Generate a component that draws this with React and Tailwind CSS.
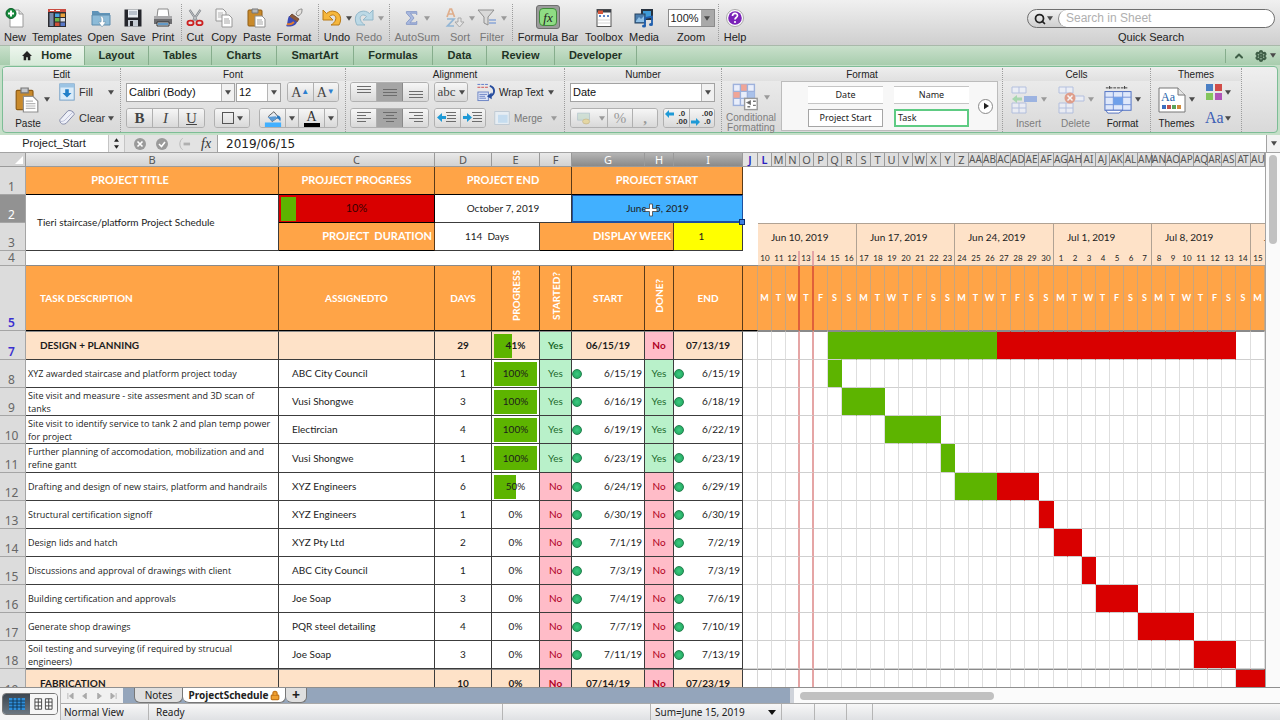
import React from "react";
import { Settings, ChevronUp, Search, Lock } from "lucide-react";

const tasks = [
  { n: 7, group: true, name: "DESIGN + PLANNING", who: "", days: 29, pct: 41, started: "Yes", start: "06/15/19", done: "No", end: "07/13/19", green: [5, 16], red: [17, 33] },
  { n: 8, name: "XYZ awarded staircase and platform project today", who: "ABC City Council", days: 1, pct: 100, started: "Yes", start: "6/15/19", done: "Yes", end: "6/15/19", green: [5, 5] },
  { n: 9, name: "Site visit and measure - site assesment and 3D scan of tanks", who: "Vusi Shongwe", days: 3, pct: 100, started: "Yes", start: "6/16/19", done: "Yes", end: "6/18/19", green: [6, 8] },
  { n: 10, name: "Site visit to identify service to tank 2 and plan temp power for project", who: "Electircian", days: 4, pct: 100, started: "Yes", start: "6/19/19", done: "Yes", end: "6/22/19", green: [9, 12] },
  { n: 11, name: "Further planning of accomodation, mobilization and and refine gantt", who: "Vusi Shongwe", days: 1, pct: 100, started: "Yes", start: "6/23/19", done: "Yes", end: "6/23/19", green: [13, 13] },
  { n: 12, name: "Drafting and design of new stairs, platform and handrails", who: "XYZ Engineers", days: 6, pct: 50, started: "No", start: "6/24/19", done: "No", end: "6/29/19", green: [14, 16], red: [17, 19] },
  { n: 13, name: "Structural certification signoff", who: "XYZ Engineers", days: 1, pct: 0, started: "No", start: "6/30/19", done: "No", end: "6/30/19", red: [20, 20] },
  { n: 14, name: "Design lids and hatch", who: "XYZ Pty Ltd", days: 2, pct: 0, started: "No", start: "7/1/19", done: "No", end: "7/2/19", red: [21, 22] },
  { n: 15, name: "Discussions and approval of drawings with client", who: "ABC City Council", days: 1, pct: 0, started: "No", start: "7/3/19", done: "No", end: "7/3/19", red: [23, 23] },
  { n: 16, name: "Building certification and approvals", who: "Joe Soap", days: 3, pct: 0, started: "No", start: "7/4/19", done: "No", end: "7/6/19", red: [24, 26] },
  { n: 17, name: "Generate shop drawings", who: "PQR steel detailing", days: 4, pct: 0, started: "No", start: "7/7/19", done: "No", end: "7/10/19", red: [27, 30] },
  { n: 18, name: "Soil testing and surveying (if required by strucual engineers)", who: "Joe Soap", days: 3, pct: 0, started: "No", start: "7/11/19", done: "No", end: "7/13/19", red: [31, 33] },
  { n: 19, group: true, name: "FABRICATION", who: "", days: 10, pct: 0, started: "No", start: "07/14/19", done: "No", end: "07/23/19", red: [34, 35] },
];

const dayCols = "L M N O P Q R S T U V W X Y Z AA AB AC AD AE AF AG AH AI AJ AK AL AM AN AO AP AQ AR AS AT AU".split(" ");
const dayNums = dayCols.map((_, i) => (i < 21 ? 10 + i : i - 20));
const dayLetters = "MTWTFSS";
const weeks = ["Jun 10, 2019", "Jun 17, 2019", "Jun 24, 2019", "Jul 1, 2019", "Jul 8, 2019"];
const inRange = (r, i) => r && i >= r[0] && i <= r[1];

function Caret({ dim }) {
  return (
    <svg viewBox="0 0 7 5" className={dim ? "h-[5px] w-[6px] shrink-0 fill-[#9a9a9a]" : "h-[5px] w-[6px] shrink-0 fill-[#4a4a4a]"}>
      <path d="M0 0h7L3.5 5z" />
    </svg>
  );
}

function Dots() {
  return <div className="w-0 shrink-0 self-stretch border-l border-dotted border-[#9c9c9c]" />;
}

function Svg({ className, children, vb = "0 0 20 20" }) {
  return <svg viewBox={vb} className={className || "h-5 w-5"} aria-hidden="true">{children}</svg>;
}

const icons = {
  new: (
    <Svg><path d="M5 2h9l4 4v13H5z" fill="#fff" stroke="#9a9a9a" /><path d="M14 2v4h4" fill="#ddd" stroke="#9a9a9a" /><circle cx="6" cy="5.500" r="5" fill="#168a3c" stroke="#0c5f28" /><path d="M6 2.500v6M3 5.500h6" stroke="#fff" strokeWidth="2" /></Svg>
  ),
  templates: (
    <Svg><rect x="1" y="1" width="18" height="18" fill="#2c2c30" /><rect x="1" y="1" width="18" height="3" fill="#c94b41" /><path d="M3 2.500h4M9 2.500h4" stroke="#fff" /><rect x="2.500" y="5" width="4" height="13" fill="#7a8aa8" /><rect x="8" y="5.500" width="4.500" height="3.500" fill="#4aa3e0" /><rect x="13.500" y="5.500" width="4.500" height="3.500" fill="#e7a03b" /><rect x="8" y="10" width="4.500" height="3.500" fill="#6fb848" /><rect x="13.500" y="10" width="4.500" height="3.500" fill="#d7dde8" /><rect x="8" y="14.500" width="4.500" height="3.500" fill="#d05038" /><rect x="13.500" y="14.500" width="4.500" height="3.500" fill="#5878c8" /></Svg>
  ),
  open: (
    <Svg><path d="M1 3h6l2 2h10v12H1z" fill="#5f93b8" /><path d="M1 7h18v10H1z" fill="#8dbbd8" stroke="#5d8cad" /><path d="M9 8c3 0 4 2 3.500 6H15l-4 5-3.500-5H10c.5-3 0-4-1-6z" fill="#fff" stroke="#6f96ae" strokeWidth=".6" /></Svg>
  ),
  save: (
    <Svg><path d="M1.500 1.500h17v17h-17z" fill="#25262c" /><rect x="5" y="1.500" width="10" height="8" fill="#e9edf2" /><path d="M6 4h8M6 6h8" stroke="#8b97a8" /><rect x="5" y="12" width="10" height="6.500" fill="#c6ccd4" /><rect x="7" y="13" width="3" height="5" fill="#25262c" /></Svg>
  ),
  print: (
    <Svg><path d="M5 1h10l1 8H4z" fill="#fff" stroke="#8a8a8a" /><path d="M1 8h18v8H1z" fill="#6d6d70" /><path d="M1 8h18v3H1z" fill="#a9a9ab" /><path d="M4 14h12v4H4z" fill="#dfeaf4" stroke="#333" /><path d="M5 16h10" stroke="#3b7fb8" strokeWidth="1.500" /></Svg>
  ),
  cut: (
    <Svg className="h-5 w-[18px]"><path d="M4 1l8 12M16 1L8 13" stroke="#7b7f84" strokeWidth="2.400" /><path d="M4 1l8 12M16 1L8 13" stroke="#dfe2e6" strokeWidth=".8" /><ellipse cx="5" cy="15.500" rx="3.400" ry="2.500" fill="none" stroke="#cc2222" strokeWidth="2" /><ellipse cx="15" cy="15.500" rx="3.400" ry="2.500" fill="none" stroke="#cc2222" strokeWidth="2" /></Svg>
  ),
  copy: (
    <Svg><path d="M2 1h7l3 3v9H2z" fill="#f7f7f7" stroke="#979797" /><path d="M4 5h5M4 7h5M4 9h5" stroke="#b5b5b5" /><path d="M8 7h7l3 3v9H8z" fill="#fff" stroke="#979797" /><path d="M10 11h5M10 13h6M10 15h6" stroke="#a5a5a5" /></Svg>
  ),
  paste: (
    <Svg><rect x="1" y="2" width="14" height="16" rx="1" fill="#c98a2b" stroke="#8f5c14" /><path d="M5 1h6v4H5z" fill="#b4b7bb" stroke="#777" /><path d="M8 8h7l3 3v8H8z" fill="#fff" stroke="#8f8f8f" /><path d="M10 12h5M10 14h6M10 16h6" stroke="#a5a5a5" /></Svg>
  ),
  format: (
    <Svg><path d="M12 6c1-4 4-5 6-5 0 3 0 5-4 7z" fill="#e4e2df" stroke="#8b8b8b" /><path d="M8 6l7 5-2 3-8-5z" fill="#8c5a3c" stroke="#59341f" strokeWidth=".7" /><path d="M5 8l8 6c-2 5-8 5-11 4 2-2 1-6 3-10z" fill="#3c4bb5" /><path d="M3 16c3 1 5 0 7-2" stroke="#e07a30" strokeWidth="2" fill="none" /></Svg>
  ),
  undo: (
    <Svg><path d="M1 2v10h10L7.500 8.500C11 5 15 8 13.500 12c-.7 2-2.500 4-4.500 5h8c3-5 2-12-4-13.500C9.500 2.500 7 3.500 4.500 5.500z" fill="#f6b73c" stroke="#b97a17" /></Svg>
  ),
  redo: (
    <Svg><path d="M19 2v10H9l3.500-3.500C9 5 5 8 6.500 12c.7 2 2.500 4 4.500 5H3C0 12 1 5 7 3.500c3.500-1 6 0 8.500 2z" fill="#bcd9e6" stroke="#93b7c9" /></Svg>
  ),
  sum: (
    <Svg className="h-[18px] w-4"><path d="M3 2h13v4l-1.500-2H8l4.500 6L7.500 16h7L16 14v4H3v-2l5.500-6L3 4z" fill="#a9b9df" stroke="#8094c4" /></Svg>
  ),
  sort: (
    <Svg><path d="M2 9l3-8h1.500l3 8M3.500 6h4.500" fill="none" stroke="#dfae8c" strokeWidth="1.700" /><path d="M2 11h7L2.500 18H9" fill="none" stroke="#93b6d5" strokeWidth="1.700" /><path d="M13 10h3v4h3l-4.500 5L10 14h3z" fill="#e4e4e4" stroke="#a9a9a9" /></Svg>
  ),
  filter: (
    <Svg><path d="M1 2h16l-6 7v8l-4-2V9z" fill="#d9d9d9" stroke="#8f8f8f" /><path d="M12 12h7M12 15h7" stroke="#8aa6d8" strokeWidth="1.500" /></Svg>
  ),
  toolbox: (
    <Svg><rect x="3" y="1.500" width="14" height="17" fill="#fff" stroke="#555" /><rect x="3" y="1.500" width="14" height="3" fill="#3b4049" /><rect x="4" y="2.500" width="5" height="3.500" fill="#d8573b" /><path d="M5 8h2M9 8h2M13 8h2" stroke="#5b86c8" strokeWidth="2" /><path d="M4 12h12M4 15h12" stroke="#d5d5d5" /></Svg>
  ),
  media: (
    <Svg><rect x="7" y="1" width="12" height="11" fill="#27323f" /><rect x="9" y="3" width="8" height="7" fill="#3f9bd8" /><rect x="1" y="6" width="10" height="9" fill="#4a7dae" stroke="#27425f" /><path d="M2 13l3-4 2 2 3-3v6H2z" fill="#8fc0e6" /><path d="M11 18v-8l7-1.500V16" fill="none" stroke="#1f5fae" strokeWidth="1.800" /><ellipse cx="10" cy="18" rx="2" ry="1.500" fill="#1f5fae" /><ellipse cx="17" cy="16.500" rx="2" ry="1.500" fill="#1f5fae" /></Svg>
  ),
  help: (
    <Svg><circle cx="10" cy="10" r="8.500" fill="#fff" stroke="#a9a9a9" /><circle cx="10" cy="10" r="6.800" fill="#7a22b8" /><path d="M7.500 8c0-3.500 5-3.500 5-.5 0 2-2.500 2-2.500 4" fill="none" stroke="#fff" strokeWidth="1.700" /><circle cx="10" cy="14" r="1.100" fill="#fff" /></Svg>
  ),
};

function Tool({ w, icon, label, caret, dim }) {
  return (
    <button className={"flex shrink-0 flex-col items-center whitespace-nowrap pt-2 text-[11px] leading-[13px] " + w + (dim ? " text-[#777]" : " text-[#222]")}>
      <span className="flex h-5 items-center gap-1">
        {icons[icon]}
        {caret && <Caret dim={dim} />}
      </span>
      <span className="pt-[3px]">{label}</span>
    </button>
  );
}

function TopBar() {
  return (
    <header className="flex h-[45px] shrink-0 bg-linear-to-b from-[#f0f0f0] to-[#cfcfcf]">
      <Tool w="w-[30px]" icon="new" label="New" />
      <Tool w="w-[54px]" icon="templates" label="Templates" />
      <Tool w="w-[34px]" icon="open" label="Open" />
      <Tool w="w-[30px]" icon="save" label="Save" />
      <Tool w="w-[30px]" icon="print" label="Print" />
      <div className="flex w-[6px] shrink-0 justify-center py-1"><Dots /></div>
      <Tool w="w-[22px]" icon="cut" label="Cut" />
      <Tool w="w-[36px]" icon="copy" label="Copy" />
      <Tool w="w-[30px]" icon="paste" label="Paste" />
      <Tool w="w-[44px]" icon="format" label="Format" />
      <div className="flex w-[4px] shrink-0 justify-center py-1"><Dots /></div>
      <Tool w="w-[34px]" icon="undo" label="Undo" caret />
      <Tool w="w-[30px]" icon="redo" label="Redo" caret dim />
      <div className="flex w-[10px] shrink-0 justify-center py-1"><Dots /></div>
      <Tool w="w-[46px]" icon="sum" label="AutoSum" caret dim />
      <Tool w="w-[40px]" icon="sort" label="Sort" caret dim />
      <Tool w="w-[24px]" icon="filter" label="Filter" caret dim />
      <div className="flex w-[12px] shrink-0 justify-end py-1 pr-[3px]"><Dots /></div>
      <button className="flex w-[64px] shrink-0 flex-col items-center whitespace-nowrap pt-[5px] text-[11px] leading-[13px] text-[#222]">
        <span className="flex h-6 w-6 items-center justify-center rounded-[3px] border border-[#6f6f6f] bg-[#9b9b9b]">
          <span className="flex h-[18px] w-[18px] items-center justify-center rounded-[4px] border border-[#3f8a3a] bg-[#8fdc84] font-['Liberation_Serif',serif] text-[13px] italic">fx</span>
        </span>
        <span className="pt-[2px]">Formula Bar</span>
      </button>
      <Tool w="w-[48px]" icon="toolbox" label="Toolbox" />
      <Tool w="w-[32px]" icon="media" label="Media" />
      <div className="ml-[6px] flex w-[50px] shrink-0 flex-col items-center pt-[9px] text-[11px] leading-[13px] text-[#222]">
        <div className="flex h-[18px] w-[47px] border border-[#8b8b8b] bg-white">
          <select id="zoom" className="w-8 appearance-none pl-[2px] text-[11px]"><option>100%</option></select>
          <span className="pointer-events-none flex flex-1 items-center justify-center bg-[#a9a9a9]"><Caret /></span>
        </div>
        <label htmlFor="zoom" className="pt-[4px]">Zoom</label>
      </div>
      <div className="flex w-[4px] shrink-0 justify-center py-1"><Dots /></div>
      <Tool w="w-[30px]" icon="help" label="Help" />
      <div className="ml-auto mr-[5px] flex w-[248px] flex-col items-center pt-[9px] text-[11px] leading-[13px] text-[#222]">
        <div className="flex h-[19px] w-full overflow-hidden rounded-full border border-[#6f6f6f] bg-linear-to-b from-[#f2f2f2] to-[#cfcfcf]">
          <span className="flex w-[30px] items-center justify-center gap-[1px]">
            <Search className="h-3 w-3 text-[#222]" strokeWidth={3.5} /><Caret />
          </span>
          <input id="search" placeholder="Search in Sheet" className="min-w-0 flex-1 rounded-full border-l border-[#8a8a8a] bg-white pl-[7px] text-[12px] outline-none placeholder:text-[#b0b0b0]" />
        </div>
        <label htmlFor="search" className="pt-[3px]">Quick Search</label>
      </div>
    </header>
  );
}

function RibbonTabs() {
  const tabs = [["Layout", "w-[64px]"], ["Tables", "w-[63px]"], ["Charts", "w-[65px]"], ["SmartArt", "w-[77px]"], ["Formulas", "w-[79px]"], ["Data", "w-[54px]"], ["Review", "w-[68px]"], ["Developer", "w-[82px]"]];
  return (
    <nav className="flex h-[20px] shrink-0 border-t border-[#a9b9aa] bg-linear-to-b from-[#c9e0cb] to-[#a8cdae] pl-[10px] text-[11px] font-bold text-[#1f3325]">
      <button className="flex w-[75px] items-center justify-center gap-[9px] border-r border-[#86ad8c] bg-linear-to-b from-[#eef6ee] to-[#d6e9d8]">
        <Svg vb="0 0 12 12" className="h-[10px] w-[10px]"><path d="M6 0l6 6h-2v5H7V7.500H5V11H2V6H0z" fill="#222" /></Svg>Home
      </button>
      {tabs.map(([t, w]) => (
        <button key={t} className={"border-r border-[#86ad8c] " + w}>{t}</button>
      ))}
      <div className="ml-auto flex items-center text-[#3f5f47]">
        <span className="h-[14px] border-l border-[#86ad8c]" />
        <button className="px-[7px]" aria-label="Collapse ribbon"><ChevronUp className="h-3 w-3" strokeWidth={4} /></button>
        <button className="flex items-center gap-[3px] pl-[3px] pr-[4px]" aria-label="Ribbon settings"><Settings className="h-3 w-3" strokeWidth={4} /><Caret /></button>
      </div>
    </nav>
  );
}

function Group({ title, w, children }) {
  return (
    <section className={"flex shrink-0 flex-col " + w}>
      <h2 className="h-[13px] shrink-0 bg-linear-to-b from-[#ededed] to-[#e0e0e0] text-center text-[10px] leading-[13px] text-[#222]">{title}</h2>
      {children}
    </section>
  );
}

const btn = "flex items-center justify-center border-[#b0b0b0] bg-linear-to-b from-[#f6f6f6] to-[#d9d9d9] ";
const seg = "flex h-5 overflow-hidden rounded-[3px] border border-[#b0b0b0] ";

function Combo({ w, label, value }) {
  return (
    <div className={"flex h-[19px] border border-[#a3a3a3] bg-white " + w}>
      <select aria-label={label} className="min-w-0 flex-1 appearance-none pl-[2px] text-[11px] text-[#111]"><option>{value}</option></select>
      <span className="pointer-events-none flex w-[13px] items-center justify-center border-l border-[#b5b5b5] bg-[#f1f1f1]"><Caret /></span>
    </div>
  );
}

function Lines({ rows }) {
  return (
    <Svg vb="0 0 16 14" className="h-[14px] w-4">
      {rows.map(([x, y, w]) => <path key={y} d={`M${x} ${y}.5h${w}`} stroke="#6c6c6c" />)}
    </Svg>
  );
}

function BigButton({ label, w, dim, children }) {
  return (
    <button className={"flex flex-col items-center whitespace-nowrap text-[10px] leading-[13px] " + w + (dim ? " text-[#7d7d7d]" : " text-[#222]")}>
      <span className="flex h-[35px] items-center gap-[3px]">{children}<Caret dim={dim} /></span>
      {label}
    </button>
  );
}

function Indent({ out }) {
  return (
    <Svg vb="0 0 20 14" className="h-[14px] w-5">
      <path d="M9 1.500h10M10 4.500h9M10 7.500h9M9 10.500h10" stroke="#6c6c6c" />
      <path d={out ? "M0 6.500l5-4.500v3h4v3H5v3z" : "M9 6.500L4 2v3H0v3h4v3z"} fill="#1f9ad6" />
    </Svg>
  );
}

function Decimal({ more }) {
  return (
    <span className="grid grid-cols-2 text-center font-['Liberation_Sans',sans-serif] text-[8px] font-bold leading-[8px] text-[#333]">
      {more ? <Svg vb="0 0 9 8" className="h-2 w-[9px]"><path d="M0 4l4-4v2.500h5v3H4V8z" fill="#1f9ad6" /></Svg> : <span />}
      <span>{more ? ".0" : ".00"}</span>
      {more ? <span /> : <Svg vb="0 0 9 8" className="h-2 w-[9px]"><path d="M9 4L5 0v2.500H0v3h5V8z" fill="#1f9ad6" /></Svg>}
      <span>{more ? ".00" : ".0"}</span>
    </span>
  );
}

function Ribbon() {
  return (
    <div className="flex h-[70px] shrink-0 bg-[#c5dfc8] px-[2px] pb-[2px] pt-[1px]">
      <div className="flex min-w-0 flex-1 rounded-[4px] border border-[#7dbd96] bg-linear-to-b from-[#efefef] to-[#d9d9d9] pt-[1px]">
        <Group title="Edit" w="w-[117px]">
          <div className="flex pl-1 pt-[1px]">
            <button className="flex w-[42px] flex-col items-center text-[10px] leading-[13px] text-[#222]">
              <span className="flex h-[35px] items-center gap-[5px] pl-2">
                <Svg className="h-7 w-6"><rect x="1" y="2" width="14" height="16" rx="1" fill="#c98a2b" stroke="#8f5c14" /><path d="M5 0h6v4H5z" fill="#c4c7cb" stroke="#777" /><path d="M7 7h8l4 4v9H7z" fill="#fff" stroke="#8f8f8f" /><path d="M9 11h6M9 13h8M9 15h8M9 17h8" stroke="#b5b5b5" /></Svg>
                <Caret />
              </span>
              Paste
            </button>
            <div className="flex flex-col gap-[6px] pl-[9px] text-[11px] text-[#333]">
              <button className="flex h-5 items-center">
                <Svg className="h-5 w-[18px]"><rect x="2" y="1" width="16" height="18" fill="#d9ebf9" stroke="#6d9cc4" /><rect x="2" y="1" width="16" height="4" fill="#9cc4e4" /><path d="M8 7h4v4h3l-5 5-5-5h3z" fill="#2180c9" /></Svg>
                <span className="w-[32px] pl-[3px] text-left">Fill</span><Caret />
              </button>
              <button className="flex h-5 items-center">
                <Svg className="h-5 w-[18px]"><path d="M2 12L11 2c3-1 7 1 7 4L9 16c-4 2-7 0-7-4z" fill="#eef0f8" stroke="#7d83a3" /><path d="M3 14c2 0 5-1 6-3l8-8" stroke="#b9bdd6" fill="none" /></Svg>
                <span className="w-[32px] pl-[3px] text-left">Clear</span><Caret />
              </button>
            </div>
          </div>
        </Group>
        <Dots />
        <Group title="Font" w="w-[224px]">
          <div className="flex flex-col gap-[6px] pl-[5px] pt-[1px]">
            <div className="flex h-5 items-center">
              <Combo w="w-[109px]" label="Font" value="Calibri (Body)" />
              <Combo w="ml-[1px] w-[45px]" label="Font size" value="12" />
              <div className={seg + "ml-[6px] w-[52px] font-['Liberation_Serif',serif] text-[14px] text-[#444]"}>
                <button className={btn + "flex-1 border-r"}>A<span className="text-[8px] text-[#2d7fd0]">▲</span></button>
                <button className={btn + "flex-1"}>A<span className="text-[8px] text-[#2d7fd0]">▼</span></button>
              </div>
            </div>
            <div className="flex h-5 items-center">
              <div className={seg + "w-[79px] font-['Liberation_Serif',serif] text-[15px] text-[#444]"}>
                <button className={btn + "flex-1 border-r font-bold"}>B</button>
                <button className={btn + "flex-1 border-r italic"}>I</button>
                <button className={btn + "flex-1 underline"}>U</button>
              </div>
              <div className={seg + "ml-[9px] w-[36px]"}>
                <button className={btn + "flex-1 gap-[3px]"} aria-label="Borders"><span className="h-3 w-3 border border-[#555]" /><Caret /></button>
              </div>
              <div className={seg + "ml-[9px] w-[79px]"}>
                <button className={btn + "w-[26px] border-r"} aria-label="Fill colour">
                  <Svg className="h-[18px] w-5"><path d="M5 8l6-5 5 6-7 5z" fill="#e5eaf0" stroke="#555" /><path d="M15 7c4 1 4 4 3 7-1-3-3-3-4-4z" fill="#2878c0" /><path d="M4 9l9-1 2 2-6 4z" fill="#5b9bd5" /><rect x="1" y="15" width="18" height="5" fill="#41b0ff" /></Svg>
                </button>
                <button className={btn + "w-[13px] border-r"} aria-label="Fill colour choices"><Caret /></button>
                <button className={btn + "w-[26px] flex-col border-r"} aria-label="Font colour">
                  <span className="font-['Liberation_Serif',serif] text-[14px] leading-[13px] text-[#333]">A</span>
                  <span className="h-[4px] w-4 bg-black" />
                </button>
                <button className={btn + "flex-1"} aria-label="Font colour choices"><Caret /></button>
              </div>
            </div>
          </div>
        </Group>
        <Dots />
        <Group title="Alignment" w="w-[218px]">
          <div className="flex flex-col gap-[6px] pl-1 pt-[1px] text-[10px] text-[#222]">
            <div className="flex h-5 items-center">
              <div className={seg + "w-[79px]"}>
                <button className={btn + "flex-1 border-r"} aria-label="Align top"><Lines rows={[[1, 1, 14], [1, 4, 14], [1, 7, 14]]} /></button>
                <button className="flex flex-1 items-center justify-center border-r border-[#8a8a8a] bg-[#a5a5a5]" aria-label="Align middle"><Lines rows={[[1, 4, 14], [1, 7, 14], [1, 10, 14]]} /></button>
                <button className={btn + "flex-1"} aria-label="Align bottom"><Lines rows={[[1, 6, 14], [1, 9, 14], [1, 12, 14]]} /></button>
              </div>
              <div className={seg + "ml-[5px] w-[34px]"}>
                <button className={btn + "flex-1 gap-[3px] font-['Liberation_Serif',serif] text-[13px] text-[#444]"}>abc<Caret /></button>
              </div>
              <button className="ml-2 flex items-center whitespace-nowrap">
                <Svg className="h-[19px] w-5"><path d="M1 1.500h12" stroke="#5b79c9" strokeDasharray="3 1" /><path d="M1 4.500h12" stroke="#d04b4b" strokeDasharray="3 1" /><rect x="1.500" y="9.500" width="11" height="9" fill="#dfe6f7" stroke="#6a82c4" /><path d="M3 12h8M3 14h6M3 16h7" stroke="#6a82c4" /><path d="M14 3c6 2 6 9 0 11" fill="none" stroke="#274d9e" strokeWidth="2" /><path d="M11 14l5-4v7z" fill="#274d9e" /></Svg>
                <span className="w-[52px] pl-[3px] text-left">Wrap Text</span><Caret />
              </button>
            </div>
            <div className="flex h-5 items-center">
              <div className={seg + "w-[79px]"}>
                <button className={btn + "flex-1 border-r"} aria-label="Align left"><Lines rows={[[1, 1, 14], [1, 4, 9], [1, 7, 14], [1, 10, 9]]} /></button>
                <button className="flex flex-1 items-center justify-center border-r border-[#8a8a8a] bg-[#a5a5a5]" aria-label="Align centre"><Lines rows={[[1, 1, 14], [4, 4, 8], [1, 7, 14], [4, 10, 8]]} /></button>
                <button className={btn + "flex-1"} aria-label="Align right"><Lines rows={[[1, 1, 14], [6, 4, 9], [1, 7, 14], [6, 10, 9]]} /></button>
              </div>
              <div className={seg + "ml-[5px] w-[52px]"}>
                <button className={btn + "flex-1 border-r"} aria-label="Decrease indent"><Indent out /></button>
                <button className={btn + "flex-1"} aria-label="Increase indent"><Indent /></button>
              </div>
              <button className="ml-[7px] flex items-center text-[#777]">
                <Svg className="h-4 w-[18px]"><rect x="1" y="2" width="18" height="16" fill="#e6edf3" stroke="#b9c5d0" /><rect x="5" y="6" width="12" height="10" fill="#c5dcef" /></Svg>
                <span className="w-[40px] pl-[3px] text-left">Merge</span><Caret dim />
              </button>
            </div>
          </div>
        </Group>
        <Dots />
        <Group title="Number" w="w-[156px]">
          <div className="flex flex-col gap-[6px] pl-[5px] pt-[1px]">
            <div className="flex h-5 items-center"><Combo w="w-[145px]" label="Number format" value="Date" /></div>
            <div className="flex h-5 items-center gap-[5px]">
              <div className={seg + "w-[88px] font-['Liberation_Serif',serif] text-[15px] text-[#999]"}>
                <button className={btn + "w-[25px]"} aria-label="Currency"><Svg className="h-[14px] w-5 opacity-60"><rect x="1" y="3" width="17" height="10" fill="#bfd8c6" stroke="#89a8b8" /><ellipse cx="13" cy="15" rx="5" ry="3.500" fill="#e7cf7a" stroke="#b29a4d" /></Svg></button>
                <button className={btn + "w-3 border-r"} aria-label="Currency choices"><Caret dim /></button>
                <button className={btn + "flex-1 border-r"}>%</button>
                <button className={btn + "flex-1 font-bold"}>,</button>
              </div>
              <div className={seg + "w-[52px]"}>
                <button className={btn + "flex-1 border-r"} aria-label="Increase decimals"><Decimal more /></button>
                <button className={btn + "flex-1"} aria-label="Decrease decimals"><Decimal /></button>
              </div>
            </div>
          </div>
        </Group>
        <Dots />
        <Group title="Format" w="w-[280px]">
          <div className="flex gap-[4px] pl-[3px]">
            <button className="flex w-[52px] flex-col items-center text-[10px] leading-[10px] text-[#7d7d7d]">
              <span className="flex h-[32px] items-center gap-1">
                <Svg className="h-7 w-7"><rect x="1" y="1" width="15" height="15" fill="#e9eefb" stroke="#9db1dc" /><rect x="6" y="1" width="5" height="5" fill="#f0a596" /><rect x="1" y="6" width="5" height="5" fill="#f0a596" /><rect x="11" y="6" width="5" height="5" fill="#a9c1ea" /><path d="M1 6h15M1 11h15M6 1v15M11 1v15" stroke="#9db1dc" /><rect x="9" y="11" width="9" height="8" fill="#fff" stroke="#999" /><path d="M11 14l2-1v2zM15 13h2M11 17h2M15 16h2" stroke="#777" /></Svg>
                <Caret dim />
              </span>
              Conditional Formatting
            </button>
            <div className="flex h-[50px] w-[217px] items-center border border-[#bcbcbc] bg-[#f7f7f7]">
              <div className="grid flex-1 grid-cols-[75px_75px] gap-x-[11px] gap-y-[5px] pl-[26px] font-['Noto_Sans',sans-serif] text-[9px] text-[#222]">
                <button className="h-[18px] border-y border-[#c5c5c5] bg-white">Date</button>
                <button className="h-[18px] border-y border-[#c5c5c5] bg-white">Name</button>
                <button className="h-[18px] border border-[#a5a5a5] bg-white">Project Start</button>
                <button className="h-[18px] border-2 border-[#5ecb83] bg-white pl-[2px] text-left">Task</button>
              </div>
              <button aria-label="More styles" className="mr-1 flex h-[15px] w-[15px] items-center justify-center rounded-full border border-[#8a8a8a] bg-white">
                <Svg vb="0 0 6 8" className="ml-[1px] h-2 w-[5px]"><path d="M0 0l6 4-6 4z" fill="#222" /></Svg>
              </button>
            </div>
          </div>
        </Group>
        <Dots />
        <Group title="Cells" w="w-[147px]">
          <div className="flex pl-[2px] pt-[1px]">
            <BigButton label="Insert" w="w-[47px]" dim>
              <Svg vb="0 0 28 28" className="h-7 w-7 opacity-70"><path d="M2 1h14v6H2zM9 1v6M2 17h14v10H2zM9 17v10M2 22h14" fill="#eef1fb" stroke="#9fb0dc" /><rect x="14" y="10" width="13" height="6" fill="#7f9fe0" /><path d="M2 13l5-4v2.500h5v3H7V17z" fill="#8ed29a" /></Svg>
            </BigButton>
            <BigButton label="Delete" w="w-[47px]" dim>
              <Svg vb="0 0 28 28" className="h-7 w-7 opacity-70"><path d="M2 1h14v6H2zM9 1v6M2 17h14v10H2zM9 17v10M2 22h14M15 10h12v5H15z" fill="#eef1fb" stroke="#9fb0dc" /><circle cx="13" cy="12" r="5.500" fill="#dd8066" /><path d="M10.500 9.500l5 5M15.500 9.500l-5 5" stroke="#fff" strokeWidth="1.500" /></Svg>
            </BigButton>
            <BigButton label="Format" w="w-[47px]">
              <Svg vb="0 0 30 30" className="h-7 w-7"><path d="M2 2h24M6 0v4M22 0v4" stroke="#333" strokeDasharray="3 1" /><rect x="1" y="6" width="28" height="20" fill="#dfe8fa" stroke="#4a6cc0" /><path d="M10 6v20M20 6v20M1 12h28M1 20h28" stroke="#6f8fd6" /><rect x="10" y="12" width="10" height="8" fill="#6fa0ea" /><path d="M2 26h18l-4 3H4z" fill="#fff" stroke="#4a6cc0" /></Svg>
            </BigButton>
          </div>
        </Group>
        <Dots />
        <Group title="Themes" w="w-[90px]">
          <div className="flex pl-[2px] pt-[1px]">
            <BigButton label="Themes" w="w-[47px]">
              <Svg vb="0 0 28 26" className="h-[26px] w-7"><path d="M1 1h19l7 7v17H1z" fill="#fff" stroke="#777" /><path d="M20 1v7h7" fill="#e5e5e5" stroke="#777" /><text x="3" y="14" fontSize="12" fontFamily="Liberation Serif" fill="#1d5fa8">Aa</text><path d="M4 20h4" stroke="#3c6fc0" strokeWidth="4" /><path d="M9 20h4" stroke="#c0504d" strokeWidth="4" /><path d="M14 20h4" stroke="#5aa35a" strokeWidth="4" /><path d="M19 20h4" stroke="#d08a3c" strokeWidth="4" /></Svg>
            </BigButton>
            <div className="flex flex-col gap-[6px] pl-[5px]">
              <button className="flex h-5 items-center gap-[2px]" aria-label="Theme colours">
                <Svg vb="0 0 18 18" className="h-[18px] w-[18px]"><rect x="1" y="1" width="7" height="7" fill="#4a7fc4" /><rect x="10" y="1" width="7" height="7" fill="#d14c48" /><rect x="1" y="10" width="7" height="7" fill="#84c55c" /><rect x="10" y="10" width="7" height="7" fill="#b053b8" /></Svg><Caret />
              </button>
              <button className="flex h-5 items-center gap-[1px] font-['Liberation_Serif',serif] text-[16px] text-[#3d5fb5]">Aa<Caret /></button>
            </div>
          </div>
        </Group>
        <Dots />
      </div>
    </div>
  );
}

function FormulaBar() {
  return (
    <div className="flex h-[18px] shrink-0 border-b border-[#a3a3a3] bg-white">
      <input aria-label="Name box" defaultValue="Project_Start" className="w-[108px] text-center text-[11px] text-[#222] outline-none" />
      <span className="flex w-[17px] flex-col items-center justify-center gap-[3px] border-x border-[#c5c5c5] bg-[#ececec]">
        <Svg vb="0 0 6 4" className="h-1 w-[5px]"><path d="M0 4h6L3 0z" fill="#222" /></Svg>
        <Svg vb="0 0 6 4" className="h-1 w-[5px]"><path d="M0 0h6L3 4z" fill="#222" /></Svg>
      </span>
      <span className="flex w-[93px] items-center gap-[10px] border-r border-[#a3a3a3] bg-[#e3e3e3] pl-[9px]">
        <Svg vb="0 0 12 12" className="h-3 w-3"><circle cx="6" cy="6" r="6" fill="#9a9a9a" /><path d="M3.500 3.500l5 5M8.500 3.500l-5 5" stroke="#fff" strokeWidth="1.600" /></Svg>
        <Svg vb="0 0 12 12" className="h-3 w-3"><circle cx="6" cy="6" r="6" fill="#9a9a9a" /><path d="M3 6l2.500 2.500L9 4" stroke="#fff" strokeWidth="1.600" fill="none" /></Svg>
        <Svg vb="0 0 14 14" className="h-[14px] w-[13px]"><path d="M5 1C1 3 1 11 5 13" fill="none" stroke="#b5b5b5" /><path d="M6 7h7" stroke="#b0b0b0" strokeWidth="3" /></Svg>
        <span className="font-['Liberation_Serif',serif] text-[14px] italic text-[#333]">fx</span>
      </span>
      <input aria-label="Formula" defaultValue="2019/06/15" className="min-w-0 flex-1 pl-2 font-['DejaVu_Sans',sans-serif] text-[12px] text-[#222] outline-none" />
      <span className="flex w-[14px] items-center justify-center border-l border-[#a3a3a3] bg-[#f3f3f3]"><Caret /></span>
    </div>
  );
}

const orange = "border-b border-r border-[#5a3a18] border-b-black bg-[#ffa447] font-bold text-white ";
const plain = "border-b border-r border-[#3c3c3c] ";
const peach = "bg-[#fee2c8] ";
const isToday = (i) => i === 2 || i === 3;

function RowHead({ n, active, blue }) {
  return (
    <th
      scope="row"
      className={
        "border-b border-r border-[#a5a5a5] pr-[2px] align-bottom font-['Noto_Sans',sans-serif] text-[12px] font-normal leading-[14px] " +
        (active ? "bg-[#929292] font-bold text-white" : blue ? "bg-[#dcdcdc] font-semibold text-[#3a2fd0]" : "bg-[#dcdcdc] text-[#666]")
      }
    >
      {n}
    </th>
  );
}

function Bar({ pct, children }) {
  return (
    <div className="mx-[2px] grid h-[24px] items-center">
      <div className="h-full bg-[#5db400] [grid-area:1/1]" style={{ width: pct + "%" }} />
      <span className="[grid-area:1/1]">{children}</span>
    </div>
  );
}

function Flag({ v, top }) {
  return <td className={plain + top + (v === "Yes" ? "bg-[#b9f1ca] text-[#1c6a2c]" : "bg-[#ffbcc8] text-[#b0001e]")}>{v}</td>;
}

function DateCell({ v }) {
  return (
    <td className={plain}>
      <div className="flex items-center justify-between pr-[2px]">
        <span className="h-[10px] w-[10px] rounded-full border border-[#23804d] bg-radial from-[#3ccb80] to-[#1ba15b]" />
        {v}
      </div>
    </td>
  );
}

function TaskRow({ t }) {
  const g = t.group;
  const top = g ? "border-t border-t-[#8a8a8a] " : "";
  const bg = g ? peach : "";
  return (
    <tr className={(g ? "h-[29px] font-bold " : t.n === 11 ? "h-[29px] " : "h-[28px] ") + "text-center text-[#1c1c1c]"}>
      <RowHead n={t.n} blue={t.n === 7} />
      <td className={plain + top + bg + "text-left leading-[13px] " + (g ? "pl-[14px]" : "pl-[2px] font-['Open_Sans',sans-serif] text-[9px]")}>{t.name}</td>
      <td className={plain + top + bg + "pl-[13px] text-left"}>{t.who}</td>
      <td className={plain + top + bg}>{t.days}</td>
      <td className={plain + top + bg}><Bar pct={t.pct}>{t.pct}%</Bar></td>
      <Flag v={t.started} top={top} />
      {g ? <td className={plain + top + bg}>{t.start}</td> : <DateCell v={t.start} />}
      <Flag v={t.done} top={top} />
      {g ? <td className={plain + top + bg}>{t.end}</td> : <DateCell v={t.end} />}
      <td className={"border-b border-r border-[#d6d6d6] " + top} />
      {dayCols.map((c, i) => {
        const line = inRange(t.green, i)
          ? "border-r border-r-[#5db400] bg-[#5db400]"
          : inRange(t.red, i)
            ? "border-r border-r-[#d90000] bg-[#d90000]"
            : isToday(i)
              ? "border-r-2 border-r-[#e5a5a5]"
              : "border-r border-r-[#dedede]";
        return <td key={c} className={"border-b border-b-[#cfcfcf] " + top + line} />;
      })}
    </tr>
  );
}

function Sheet() {
  const letters = ["B", "C", "D", "E", "F", "G", "H", "I"];
  const head = "h-[14px] border-b border-r border-[#9a9a9a] font-normal leading-[13px] whitespace-nowrap ";
  const side = (i) => (isToday(i) ? "border-r-2 border-r-[#e0603a] " : "border-r border-r-[#c9a57c] ");
  return (
    <div className="flex min-h-0 flex-1 overflow-hidden bg-white">
      <div className="relative min-w-0 flex-1 border-r border-[#a3a3a3]">
        <table className="w-full table-fixed border-separate border-spacing-0 font-['Lato',sans-serif] text-[10px] [&_td]:py-0 [&_td:not([class*='pl-'])]:pl-0 [&_td:not([class*='pr-'])]:pr-0 [&_th]:py-0 [&_th]:pl-0 [&_th:not([class*='pr-'])]:pr-0">
          <colgroup>
            <col className="w-[26px]" /><col className="w-[253px]" /><col className="w-[156px]" /><col className="w-[57px]" />
            <col className="w-[48px]" /><col className="w-[32px]" /><col className="w-[73px]" /><col className="w-[29px]" />
            <col className="w-[69px]" /><col className="w-[15px]" />
            {dayCols.map((c, i) => (
              <col key={c} className={i === 35 ? "" : i % 14 === 6 ? "w-[15px]" : "w-[14px]"} />
            ))}
          </colgroup>
          <thead>
            <tr className="font-['Noto_Sans',sans-serif]">
              <th className={head + "bg-[#d5d5d5]"}>
                <Svg vb="0 0 8 8" className="ml-auto mr-[2px] h-2 w-2"><path d="M8 0v8H0z" fill="#fff" /></Svg>
              </th>
              {letters.map((l, i) => (
                <th key={l} scope="col" className={head + "text-[11px] " + (i > 4 ? "bg-linear-to-b from-[#b5b5b5] to-[#8a8a8a] text-white" : "bg-linear-to-b from-[#e9e9e9] to-[#d2d2d2] text-[#555]")}>{l}</th>
              ))}
              {["J", ...dayCols].map((l, i) => (
                <th key={l} scope="col" className={head + (l.length > 1 ? "text-[10px] " : "text-[11px] ") + (i < 2 ? "bg-[#e3e3e3] font-semibold text-[#2a1fc0]" : "bg-[#dedede] text-[#555]")}>{l}</th>
              ))}
            </tr>
          </thead>
          <tbody className="text-center">
            <tr className="h-[28px] text-[11px]">
              <RowHead n="1" />
              <td className={orange + "pr-[44px]"}>PROJECT TITLE</td>
              <td className={orange}>PROJJECT PROGRESS</td>
              <td colSpan={3} className={orange}>PROJECT END</td>
              <td colSpan={3} className={orange}>PROJECT START</td>
              <td colSpan={37} />
            </tr>
            <tr className="h-[28px] text-[#1c1c1c]">
              <RowHead n="2" active />
              <td rowSpan={2} className={plain + "pl-[11px] text-left"}>Tieri staircase/platform Project Schedule</td>
              <td className={plain + "border-black bg-[#d90000] text-[11px] text-[#3a0000]"}><Bar pct={10}>10%</Bar></td>
              <td colSpan={3} className={plain}>October 7, 2019</td>
              <td colSpan={3} className="relative border border-b-2 border-[#1d4f9f] bg-[#41b0ff]">
                June 15, 2019
                <span className="absolute -bottom-[4px] -right-[3px] h-[6px] w-[6px] border border-[#0d2f70] bg-[#3f7fe0]" />
                <Svg vb="0 0 14 14" className="absolute left-[71px] top-[7px] h-[14px] w-[14px]"><path d="M5.500 1h3v4.500H13v3H8.500V13h-3V8.500H1v-3h4.500z" fill="#fff" stroke="#444" strokeWidth=".8" /></Svg>
              </td>
              <td colSpan={37} />
            </tr>
            <tr className="h-[28px] text-[#1c1c1c]">
              <RowHead n="3" />
              <td className={orange + "pr-[2px] text-right text-[11px] whitespace-pre"}>{"PROJECT  DURATION"}</td>
              <td colSpan={2} className={plain + "whitespace-pre"}>{"114  Days"}</td>
              <td colSpan={3} className={orange + "pr-[2px] text-right text-[11px]"}>DISPLAY WEEK</td>
              <td className={plain + "bg-[#ffff00] pr-[13px]"}>1</td>
              <td />
              {weeks.map((w) => (
                <td key={w} colSpan={7} className="border-r border-t border-[#b0a294] bg-[#fee2c8] pl-[13px] text-left">{w}</td>
              ))}
              <td className="overflow-hidden border-t border-[#b0a294] bg-[#fee2c8] pl-[13px] text-left whitespace-nowrap">Jul 15, 2019</td>
            </tr>
            <tr className="h-[14px]">
              <RowHead n="4" />
              <td colSpan={9} className="border-b border-[#8a8a8a]" />
              {dayNums.map((d, i) => (
                <td key={i} className={"border-b border-b-[#b0a294] bg-[#fee2c8] text-[8px] leading-[12px] text-[#222] " + (isToday(i) ? "border-r-2 border-r-[#e5a5a5]" : i % 7 === 6 ? "border-r border-r-[#b0a294]" : "")}>{d}</td>
              ))}
            </tr>
            <tr className="h-[65px]">
              <RowHead n="5" blue />
              <td className={orange + "pl-[14px] text-left"}>TASK DESCRIPTION</td>
              <td className={orange}>ASSIGNEDTO</td>
              <td className={orange}>DAYS</td>
              {["PROGRESS", "STARTED?"].map((h) => (
                <td key={h} className={orange}><span className="inline-block rotate-180 leading-[12px] [writing-mode:vertical-rl]">{h}</span></td>
              ))}
              <td className={orange}>START</td>
              <td className={orange}><span className="inline-block rotate-180 leading-[12px] [writing-mode:vertical-rl]">DONE?</span></td>
              <td className={orange}>END</td>
              <td className={orange + "border-r-[#c9a57c]"} />
              {dayCols.map((c, i) => (
                <td key={c} className={"border-b border-b-[#8a8a8a] bg-[#ffa447] text-[9px] font-bold text-white " + side(i)}>{dayLetters[i % 7]}</td>
              ))}
            </tr>
            {tasks.map((t) => <TaskRow key={t.n} t={t} />)}
          </tbody>
        </table>
      </div>
      <div className="flex w-[14px] shrink-0 flex-col items-center bg-[#fafafa] pt-[2px]">
        <div className="h-[89px] w-2 rounded-full bg-[#c1c1c1]" />
      </div>
    </div>
  );
}

function BottomBar() {
  const cell = "border-r border-[#b5b5b5] ";
  return (
    <footer className="flex h-[33px] shrink-0 border-t border-[#8f8f8f] bg-[#ededed]">
      <div className="flex w-[61px] shrink-0 items-center border-r border-[#b5b5b5] bg-[#f4f4f4] pb-px pl-[2px]">
        <div className="flex h-[22px] w-[56px] overflow-hidden rounded-[4px] border border-[#777]">
          <button aria-label="Normal view" className="flex flex-1 items-center justify-center bg-linear-to-b from-[#3c4650] to-[#6b7680]">
            <Svg vb="0 0 16 12" className="h-3 w-4"><rect width="16" height="12" fill="#2f8fdb" /><path d="M0 3h16M0 6h16M0 9h16M4 0v12M8 0v12M12 0v12" stroke="#123a5a" /></Svg>
          </button>
          <button aria-label="Page layout view" className="flex flex-1 items-center justify-center bg-[#f6f6f6]">
            <Svg vb="0 0 20 12" className="h-3 w-[19px]"><path d="M1 .5h7v11H1zM12 .5h7v11h-7zM1 4h7M1 8h7M12 4h7M12 8h7M4.500 .5v11M15.500 .5v11" fill="#fff" stroke="#444" /></Svg>
          </button>
        </div>
      </div>
      <div className="flex min-w-0 flex-1 flex-col">
        <div className="flex h-[15px] shrink-0 bg-[#94a5bb]">
          <div className="flex w-[729px] shrink-0">
            <div className="flex w-[62px] items-center justify-evenly bg-[#f1f1f1]">
              {["M1 0v8M8 0v8L3 4z", "M7 0v8L2 4z", "M2 0v8l5-4z", "M1 0v8l5-4zM8 0v8"].map((d) => (
                <button key={d} aria-label="Scroll sheets"><Svg vb="0 0 9 8" className="h-[6px] w-[9px]"><path d={d} fill="#aaa" stroke="#aaa" /></Svg></button>
              ))}
            </div>
            <div className="ml-[11px] flex font-['Noto_Sans',sans-serif] text-[10px] leading-[12px] text-[#222]">
              <button className="w-[49px] rounded-b-[6px] border-x border-b border-[#777] bg-[#dfdfdf]">Notes</button>
              <button className="flex w-[103px] items-center justify-center gap-[1px] rounded-b-[6px] border-b border-r border-[#777] bg-white font-bold">
                ProjectSchedule<Lock className="h-[11px] w-[10px] text-[#c4761a]" fill="#f0a030" strokeWidth={3} />
              </button>
              <button className="w-[21px] rounded-b-[6px] border-b border-r border-[#777] bg-[#dfdfdf] text-[14px] font-bold">+</button>
            </div>
          </div>
          <div className="flex min-w-0 flex-1 items-center border-l-4 border-[#cfd3da] bg-[#fbfbfb] pl-[6px]">
            <div className="h-2 w-[194px] rounded-full bg-[#c1c1c1]" />
          </div>
        </div>
        <div className="flex flex-1 border-t border-[#a9a9a9] bg-linear-to-b from-[#f7f7f7] to-[#dfe1e4] font-['Noto_Sans',sans-serif] text-[10px] leading-[16px] text-[#222]">
          <span className={cell + "w-[88px] pl-[3px]"}>Normal View</span>
          <span className={cell + "w-[354px] pl-[7px]"}>Ready</span>
          <span className={cell + "w-[148px]"} />
          <span className={cell + "flex w-[131px] items-center pl-[4px] pr-[5px]"}>
            <select aria-label="Selection summary" className="min-w-0 flex-1 appearance-none"><option>Sum=June 15, 2019</option></select>
            <Svg vb="0 0 8 5" className="pointer-events-none h-[5px] w-2"><path d="M0 0h8L4 5z" fill="#111" /></Svg>
          </span>
          <span className={cell + "w-[33px]"} />
          <span className={cell + "w-[32px]"} />
          <span className={cell + "w-[26px]"} />
        </div>
      </div>
    </footer>
  );
}

export default function App() {
  return (
    <div className="flex h-screen flex-col overflow-hidden bg-white font-['Liberation_Sans',Arial,sans-serif]">
      <TopBar />
      <RibbonTabs />
      <Ribbon />
      <FormulaBar />
      <Sheet />
      <BottomBar />
    </div>
  );
}
